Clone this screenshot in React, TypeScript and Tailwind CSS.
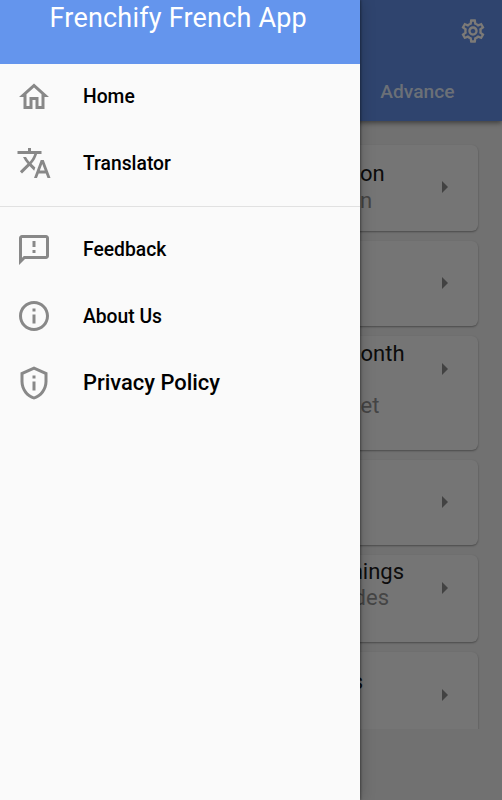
import React from "react";

const ICONS = {
  home: "M12 5.69l5 4.5V18h-2v-6H9v6H7v-7.81l5-4.5M12 3L2 12h3v8h6v-6h2v6h6v-8h3L12 3z",
  translate:
    "M12.87 15.07l-2.54-2.51.03-.03c1.74-1.94 2.98-4.17 3.71-6.53H17V4h-7V2H8v2H1v1.99h11.17C11.5 7.92 10.44 9.75 9 11.35 8.07 10.32 7.3 9.19 6.69 8h-2c.73 1.63 1.73 3.17 2.98 4.56l-5.09 5.02L4 19l5-5 3.11 3.11.76-2.04zM18.5 10h-2L12 22h2l1.12-3h4.75L21 22h2l-4.5-12zm-2.62 7l1.62-4.33L19.12 17h-3.24z",
  feedback:
    "M20 2H4c-1.1 0-1.99.9-1.99 2L2 22l4-4h14c1.1 0 2-.9 2-2V4c0-1.1-.9-2-2-2zm0 14H5.17l-.59.59-.58.58V4h16v12zm-9-4h2v2h-2zm0-6h2v4h-2z",
  info: "M11 7h2v2h-2zm0 4h2v6h-2zm1-9C6.48 2 2 6.48 2 12s4.48 10 10 10 10-4.48 10-10S17.52 2 12 2zm0 18c-4.41 0-8-3.59-8-8s3.59-8 8-8 8 3.59 8 8-3.59 8-8 8z",
  privacy:
    "M12 3.19l7 3.11V11c0 4.52-2.98 8.69-7 9.93-4.02-1.24-7-5.41-7-9.93V6.3l7-3.11M12 1L3 5v6c0 5.55 3.84 10.74 9 12 5.16-1.26 9-6.45 9-12V5l-9-4zM11 7h2v2h-2V7zm0 4h2v6h-2v-6z",
  settings:
    "M19.43 12.98c.04-.32.07-.64.07-.98 0-.34-.03-.66-.07-.98l2.11-1.65c.19-.15.24-.42.12-.64l-2-3.46c-.09-.16-.26-.25-.44-.25-.06 0-.12.01-.17.03l-2.49 1c-.52-.4-1.08-.73-1.69-.98l-.38-2.65C14.46 2.18 14.25 2 14 2h-4c-.25 0-.46.18-.49.42l-.38 2.65c-.61.25-1.17.59-1.69.98l-2.49-1c-.06-.02-.12-.03-.18-.03-.17 0-.34.09-.43.25l-2 3.46c-.13.22-.07.49.12.64l2.11 1.65c-.04.32-.07.65-.07.98 0 .33.03.66.07.98l-2.11 1.65c-.19.15-.24.42-.12.64l2 3.46c.09.16.26.25.44.25.06 0 .12-.01.17-.03l2.49-1c.52.4 1.08.73 1.69.98l.38 2.65c.03.24.24.42.49.42h4c.25 0 .46-.18.49-.42l.38-2.65c.61-.25 1.17-.59 1.69-.98l2.49 1c.06.02.12.03.18.03.17 0 .34-.09.43-.25l2-3.46c.12-.22.07-.49-.12-.64l-2.11-1.65zm-1.98-1.71c.04.31.05.52.05.73 0 .21-.02.43-.05.73l-.14 1.13.89.7 1.08.84-.7 1.21-1.27-.51-1.04-.42-.9.68c-.43.32-.84.56-1.25.73l-1.06.43-.16 1.13-.2 1.35h-1.4l-.19-1.35-.16-1.13-1.06-.43c-.43-.18-.83-.41-1.23-.71l-.91-.7-1.06.43-1.27.51-.7-1.21 1.08-.84.89-.7-.14-1.13c-.03-.31-.05-.54-.05-.74s.02-.43.05-.73l.14-1.13-.89-.7-1.08-.84.7-1.21 1.27.51 1.04.42.9-.68c.43-.32.84-.56 1.25-.73l1.06-.43.16-1.13.2-1.35h1.39l.19 1.35.16 1.13 1.06.43c.43.18.83.41 1.23.71l.91.7 1.06-.43 1.27-.51.7 1.21-1.07.85-.89.7.14 1.13zM12 8c-2.21 0-4 1.79-4 4s1.79 4 4 4 4-1.79 4-4-1.79-4-4-4zm0 6c-1.1 0-2-.9-2-2s.9-2 2-2 2 .9 2 2-.9 2-2 2z",
};

function Icon({ name, className }: { name: keyof typeof ICONS; className: string }) {
  return (
    <svg viewBox="0 0 24 24" fill="currentColor" className={className}>
      <path d={ICONS[name]} />
    </svg>
  );
}

function MenuItem({ icon, label, text }: { icon: keyof typeof ICONS; label: string; text: string }) {
  return (
    <li className="flex h-[66.5px] items-center pl-4">
      <Icon name={icon} className="size-9 shrink-0 text-[#888888]" />
      <span className={`ml-[31px] font-medium text-black ${text}`}>{label}</span>
    </li>
  );
}

function Card({ size, arrow, children }: { size: string; arrow: string; children?: React.ReactNode }) {
  return (
    <div className={`mx-6 flex shrink-0 rounded-[6px] bg-[#757575] shadow-[0_1px_2px_rgba(0,0,0,0.35)] ${size}`}>
      <div className="flex-1 text-[22px] leading-[26px]">{children}</div>
      <svg viewBox="0 0 6 12" className={`mr-[30px] h-3 w-1.5 shrink-0 ${arrow}`}>
        <path d="M0 0l6 6-6 6z" fill="#424242" />
      </svg>
    </div>
  );
}

export default function App() {
  return (
    <div className="relative h-[800px] w-[502px] overflow-hidden bg-[#717171] font-['Roboto',sans-serif]">
      <header className="relative flex h-[121px] flex-col items-end bg-[#2f446e] shadow-[0_2px_5px_rgba(0,0,0,0.45)]">
        <Icon name="settings" className="mr-[14.7px] mt-[16.5px] size-7 text-[#7c7a77]" />
        <span className="mr-[47.5px] mt-[33px] text-[19.2px] font-medium leading-[28px] text-[#6b7077]">Advance</span>
      </header>

      <main className="flex h-[607.5px] flex-col gap-[10px] overflow-hidden pt-[24px]">
        <Card size="h-[85.5px]" arrow="mt-[36.3px]">
          <p className="ml-[336px] mt-4 text-[#0c0c0c]">on</p>
          <p className="ml-[336px] mt-px text-[#454545]">n</p>
        </Card>
        <Card size="h-[85.5px]" arrow="mt-[36px]" />
        <Card size="h-[114px]" arrow="mt-[26.5px]">
          <p className="ml-[336.5px] mt-[5px] text-[#0c0c0c]">onth</p>
          <p className="ml-[336.5px] mt-[26px] text-[#454545]">et</p>
        </Card>
        <Card size="h-[85px]" arrow="mt-[36px]" />
        <Card size="h-[87px]" arrow="mt-[27px]">
          <p className="mr-[38px] mt-[4px] text-right text-[#0c0c0c]">hings</p>
          <p className="mr-[53px] text-right text-[#454545]">des</p>
        </Card>
        <Card size="h-[100px]" arrow="mt-[37px]">
          <p className="mr-[79px] mt-[17px] text-right text-[#0c0c0c]">s</p>
        </Card>
      </main>

      <aside className="absolute inset-y-0 left-0 w-[359.5px] bg-[#fafafa] shadow-[0_0_14px_rgba(0,0,0,0.25),1px_0_2px_rgba(0,0,0,0.35)]">
        <div className="h-[63.5px] bg-[#6495ed]">
          <h1 className="ml-[49.5px] whitespace-nowrap pt-[2px] text-[27px] leading-[32px] tracking-[0.2px] text-white">
            Frenchify French App
          </h1>
        </div>
        <ul>
          <MenuItem icon="home" label="Home" text="pt-[2px] text-[19.3px]" />
          <MenuItem icon="translate" label="Translator" text="pt-[3px] text-[19.3px]" />
        </ul>
        <hr className="mb-[10px] mt-[9px] border-[#e1e1e1]" />
        <ul>
          <MenuItem icon="feedback" label="Feedback" text="pt-[2px] text-[19.3px]" />
          <MenuItem icon="info" label="About Us" text="pt-[3px] text-[19.3px]" />
          <MenuItem icon="privacy" label="Privacy Policy" text="pt-[1.5px] text-[21.9px]" />
        </ul>
      </aside>
    </div>
  );
}
